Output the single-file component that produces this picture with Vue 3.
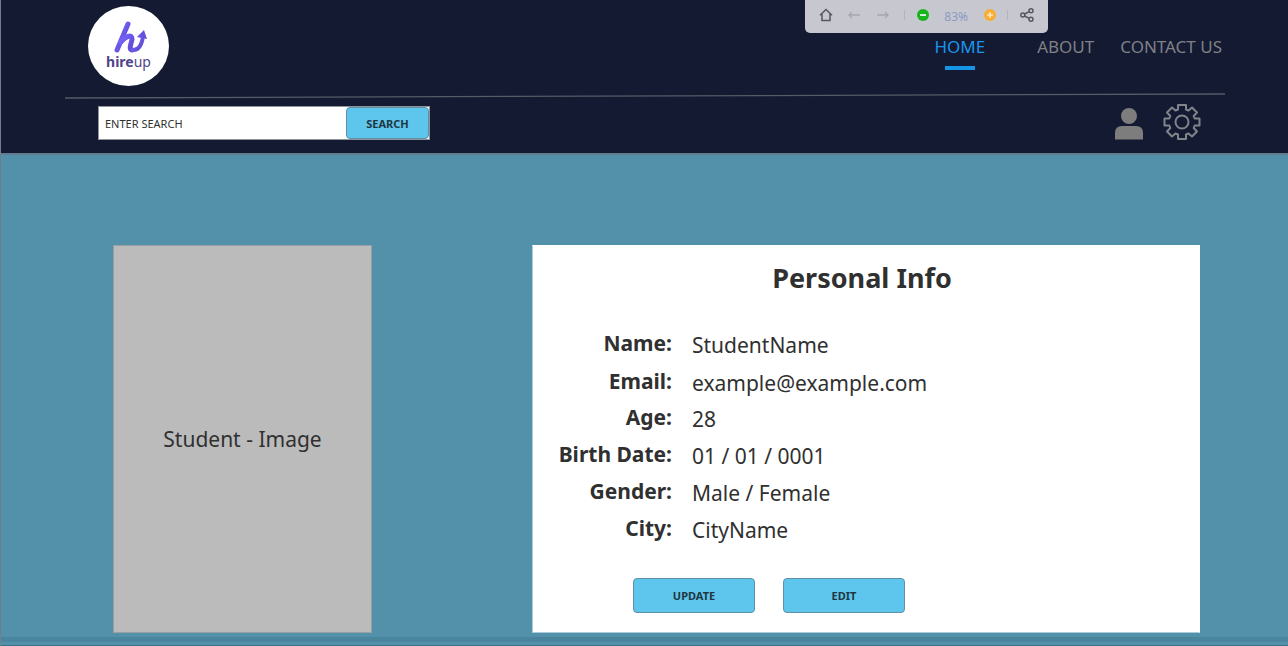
<script setup>
const links = [
  { label: 'HOME', active: true },
  { label: 'ABOUT', active: false },
  { label: 'CONTACT US', active: false },
]
const fields = [
  { label: 'Name:', value: 'StudentName' },
  { label: 'Email:', value: 'example@example.com' },
  { label: 'Age:', value: '28' },
  { label: 'Birth Date:', value: '01 / 01 / 0001' },
  { label: 'Gender:', value: 'Male / Female' },
  { label: 'City:', value: 'CityName' },
]
</script>

<template>
  <div class="page">
    <header class="header">
      <div class="top">
        <a href="#" class="logo" aria-label="hireup">
          <svg class="mark" viewBox="0 0 36 32" width="36" height="32" aria-hidden="true">
            <defs>
              <linearGradient id="ink" x1="0" y1="0" x2="1" y2="1">
                <stop offset="0" stop-color="#7a66ff" />
                <stop offset="1" stop-color="#5a48cf" />
              </linearGradient>
            </defs>
            <g fill="none" stroke="url(#ink)" stroke-linecap="round" stroke-linejoin="round">
              <path stroke-width="5" d="M15 3 L4 29" />
              <path stroke-width="5" d="M8 21 C12 16 19 12 19 18 C19 21 15 28 19 29" />
              <path stroke-width="4" d="M19 29 C26 30 29 23 30 15" />
            </g>
            <path fill="#6352df" d="M31 9 L24 16 L34 18 Z" />
          </svg>
          <span class="word"><b>hire</b>up</span>
        </a>
        <nav class="nav">
          <a v-for="l in links" :key="l.label" href="#" :class="{ active: l.active }">{{ l.label }}</a>
        </nav>
      </div>
      <svg class="rule" viewBox="0 0 1160 6" preserveAspectRatio="none" aria-hidden="true">
        <line x1="0" y1="5" x2="1160" y2="1" stroke="#555b68" stroke-width="1.300" />
      </svg>
      <div class="tools">
        <form class="search" @submit.prevent>
          <input type="text" placeholder="ENTER SEARCH" aria-label="Enter search" />
          <button class="btn" type="submit">SEARCH</button>
        </form>
        <div class="account">
          <button type="button" aria-label="Profile">
            <svg width="28" height="32" viewBox="0 0 28 32" fill="#7d7d7d">
              <circle cx="14" cy="8" r="8" />
              <path d="M0 31.500 V25 Q0 18 7 18 H21 Q28 18 28 25 V31.500 Z" />
            </svg>
          </button>
          <button type="button" aria-label="Settings">
            <svg width="38" height="38" viewBox="0 0 38 38" fill="none" stroke="#81848b" stroke-width="2">
              <path stroke-linejoin="round" d="M15 2 H23 V6.500 L25.500 7.500 L29 4.500 L34 9.500 L30.700 13 L31.700 15.500 H36.500 V22.500 H31.700 L30.700 25 L34 28.500 L29 33.500 L25.500 30.500 L23 31.500 V36 H15 V31.500 L12.500 30.500 L9 33.500 L4 28.500 L7.300 25 L6.300 22.500 H1.500 V15.500 H6.300 L7.300 13 L4 9.500 L9 4.500 L12.500 7.500 L15 6.500 Z" />
              <circle cx="19" cy="19" r="6.500" />
            </svg>
          </button>
        </div>
      </div>
      <div class="zoombar">
        <button type="button" aria-label="Home">
          <svg width="14" height="14" viewBox="0 0 14 14" fill="none" stroke="#56585f" stroke-width="1.500"><path d="M1 7.200 L7 1.500 L13 7.200 M3 6 V12.500 H11 V6" /></svg>
        </button>
        <button type="button" class="arrow" aria-label="Back">
          <svg width="12" height="10" viewBox="0 0 12 10" fill="none" stroke="#a5a7ae" stroke-width="1.300"><path d="M12 5 H1 M4 2 L1 5 L4 8" /></svg>
        </button>
        <button type="button" class="arrow" aria-label="Forward">
          <svg width="12" height="10" viewBox="0 0 12 10" fill="none" stroke="#a5a7ae" stroke-width="1.300"><path d="M0 5 H11 M8 2 L11 5 L8 8" /></svg>
        </button>
        <i></i>
        <button type="button" aria-label="Zoom out">
          <svg width="12" height="12" viewBox="0 0 12 12"><circle cx="6" cy="6" r="6" fill="#17b51b" /><path d="M3 6 H9" stroke="#e8f5e8" stroke-width="1.800" /></svg>
        </button>
        <output>83%</output>
        <button type="button" aria-label="Zoom in">
          <svg width="12" height="12" viewBox="0 0 12 12"><circle cx="6" cy="6" r="6" fill="#f9ad33" /><path d="M3 6 H9 M6 3 V9" stroke="#fbe6c4" stroke-width="1.600" /></svg>
        </button>
        <i></i>
        <button type="button" aria-label="Share">
          <svg width="14" height="14" viewBox="0 0 14 14" fill="none" stroke="#56585f" stroke-width="1.500"><circle cx="2.800" cy="7" r="2" /><circle cx="11" cy="2.800" r="2" /><circle cx="11" cy="11.200" r="2" /><path d="M4.600 6 L9.200 3.700 M4.600 8 L9.200 10.300" /></svg>
        </button>
      </div>
    </header>

    <main class="main">
      <div class="photo">Student - Image</div>
      <section class="card">
        <h1>Personal Info</h1>
        <dl>
          <template v-for="f in fields" :key="f.label">
            <dt>{{ f.label }}</dt>
            <dd>{{ f.value }}</dd>
          </template>
        </dl>
        <div class="actions">
          <button class="btn" type="button">UPDATE</button>
          <button class="btn" type="button">EDIT</button>
        </div>
      </section>
    </main>
    <footer class="foot"></footer>
  </div>
</template>

<style>
body {
  background: #5291a9;
}
</style>

<style scoped>
.page {
  box-sizing: border-box;
  min-height: 100vh;
  display: flex;
  flex-direction: column;
  border-left: 1px solid #6d7f8a;
  background: #5291a9;
  color: #303030;
  font-family: 'Noto Sans', 'Open Sans', sans-serif;
}
button {
  margin: 0;
  padding: 0;
  border: 0;
  background: none;
  font-family: inherit;
  display: flex;
  align-items: center;
  justify-content: center;
}
.header {
  position: relative;
  background: #131a31;
  border-bottom: 2px solid #5f7d8c;
  padding: 6px 63px 12px 64px;
}
.top {
  display: flex;
  justify-content: space-between;
  align-items: flex-start;
  padding: 0 3px 0 23px;
}
.logo {
  width: 81px;
  height: 80px;
  border-radius: 50%;
  background: #fff;
  display: flex;
  flex-direction: column;
  align-items: center;
  padding-top: 15px;
  box-sizing: border-box;
  color: #50458a;
  text-decoration: none;
}
.mark {
  flex: none;
  margin-left: 4px;
}
.word {
  font-size: 14px;
  line-height: 18px;
}
.nav {
  display: flex;
  gap: 26px;
  padding-top: 29px;
}
.nav a {
  color: #808187;
  font-size: 17px;
  line-height: 24px;
  text-decoration: none;
}
.nav .active {
  color: #1c95ec;
  margin-right: 26px;
}
.nav .active::after {
  content: '';
  display: block;
  width: 30px;
  height: 4px;
  margin: 7px auto 0;
  background: #1695e8;
}
.rule {
  display: block;
  width: 100%;
  height: 6px;
  margin-top: 7px;
}
.tools {
  display: flex;
  justify-content: space-between;
  align-items: flex-start;
  padding: 4px 24px 0 33px;
}
.search {
  display: flex;
  box-sizing: border-box;
  width: 332px;
  height: 34px;
  margin-top: 3px;
  border: 1px solid #8f969b;
  background: #fff;
}
.search input {
  flex: 1;
  min-width: 0;
  border: 0;
  padding: 0 6px;
  background: none;
  outline: none;
  font-family: inherit;
  font-size: 11px;
  color: #303030;
}
.search input::placeholder {
  color: #303030;
  opacity: 1;
}
.btn {
  box-sizing: border-box;
  background: #5ec6ec;
  border: 1px solid #5f8fa5;
  border-radius: 4px;
  color: #203642;
  font-weight: 700;
  font-size: 11px;
}
.search .btn {
  width: 83px;
}
.account {
  display: flex;
  align-items: center;
  gap: 20px;
}
.account button:first-child {
  padding-top: 4px;
}
.zoombar {
  position: absolute;
  top: 0;
  right: 240px;
  width: 243px;
  height: 33px;
  box-sizing: border-box;
  padding: 0 14px 3px;
  border-radius: 0 0 5px 5px;
  background: #c6c7cf;
  display: flex;
  align-items: center;
  justify-content: space-between;
}
.zoombar .arrow {
  margin: 0 3px;
}
.zoombar i {
  width: 1px;
  height: 10px;
  background: #b2b4bc;
}
.zoombar output {
  color: #8d9bc4;
  font-size: 12px;
  padding: 2px 4px 0;
}
.main {
  display: grid;
  grid-template-columns: 259px 1fr;
  gap: 160px;
  padding: 90px 88px 4px 112px;
}
.photo {
  display: flex;
  align-items: center;
  justify-content: center;
  box-sizing: border-box;
  border: 1px solid #9a9fa1;
  background: #bbb;
  font-size: 21px;
}
.card {
  box-sizing: border-box;
  background: #fff;
  border: 1px solid #a9cdda;
  border-top-color: #fff;
  border-right-color: #fff;
  padding: 12px 34px 19px 26px;
}
h1 {
  margin: 0;
  text-align: center;
  font-size: 27px;
  line-height: 40px;
}
dl {
  display: grid;
  grid-template-columns: 113px 1fr;
  grid-template-rows: 38px 36px 37px 37px 37px 37px;
  column-gap: 20px;
  margin: 33px 0 0;
  font-size: 21px;
  line-height: 24px;
}
dt {
  display: flex;
  justify-content: flex-end;
  font-weight: 700;
  white-space: nowrap;
}
dd {
  margin: 0;
  padding-top: 2px;
}
.actions {
  display: flex;
  gap: 28px;
  padding-left: 74px;
  margin-top: 25px;
}
.actions .btn {
  width: 122px;
  height: 35px;
}
.foot {
  flex: 1;
  border-top: 5px solid #4a859e;
  border-bottom: 1px solid #3a7189;
}
</style>
